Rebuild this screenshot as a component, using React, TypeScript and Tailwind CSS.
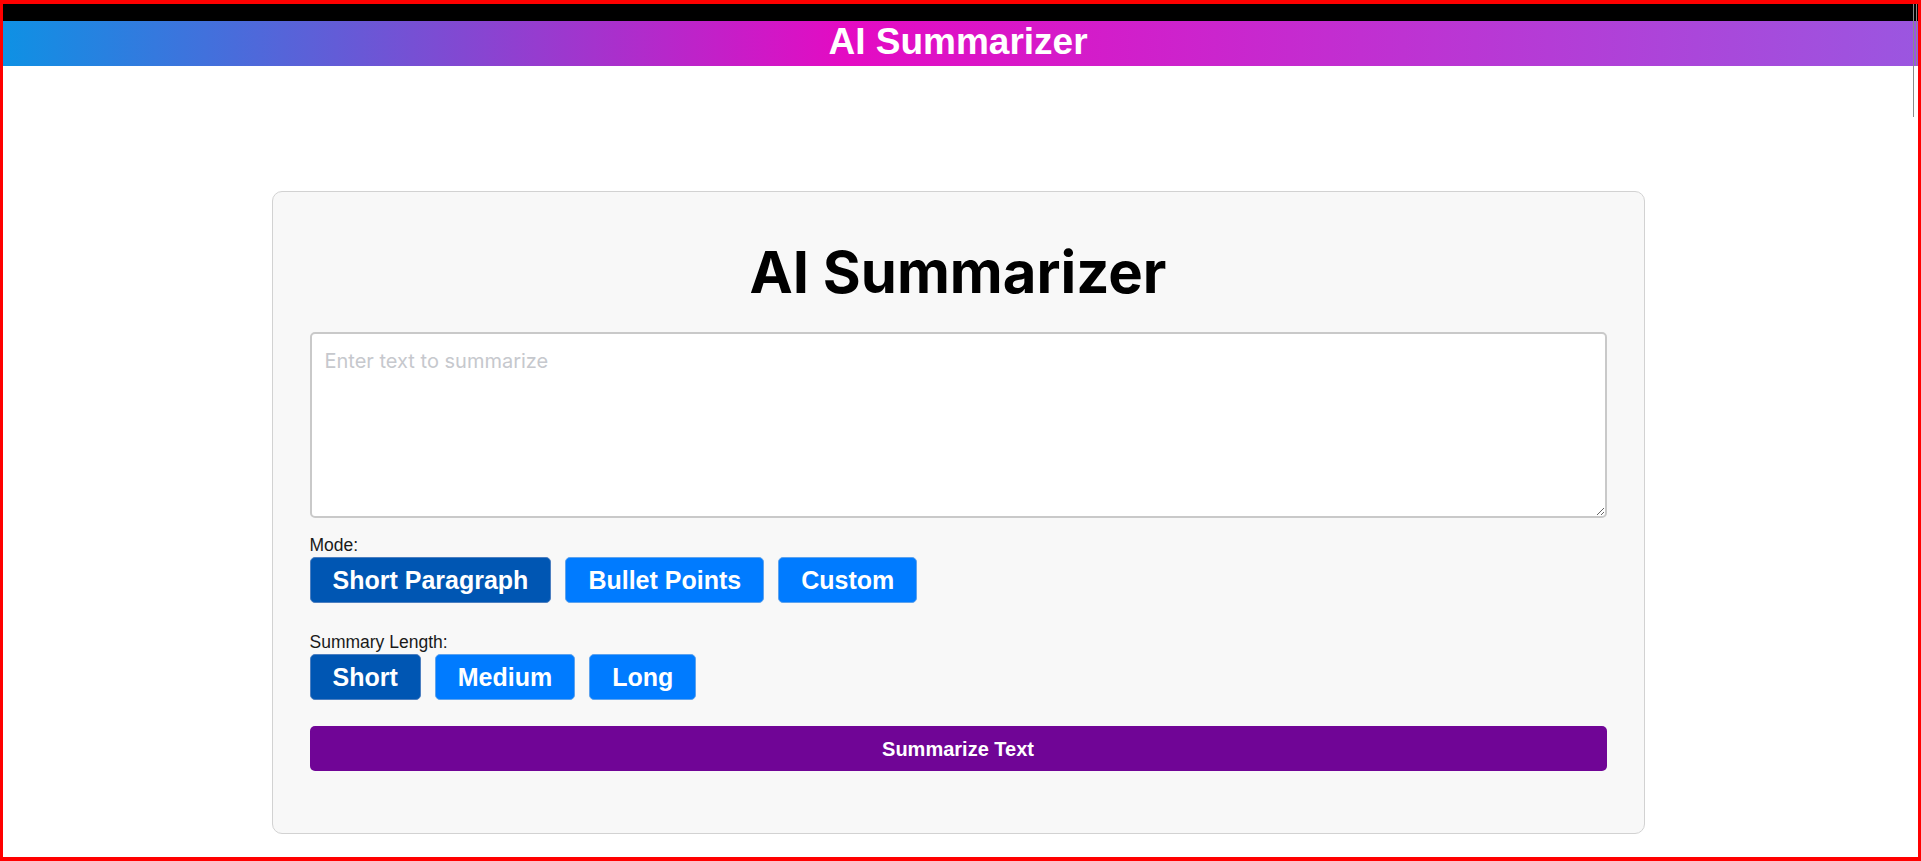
import React, { useState } from "react";

const modes = ["Short Paragraph", "Bullet Points", "Custom"];
const lengths = ["Short", "Medium", "Long"];

function OptionButton({
  label,
  active,
  onClick,
}: {
  label: string;
  active: boolean;
  onClick: () => void;
}) {
  return (
    <button
      type="button"
      onClick={onClick}
      className={
        active
          ? "h-[46px] px-[22px] rounded-[5px] border border-[#4d7fc0] bg-[#0056b3] text-white text-[25px] font-bold leading-none"
          : "h-[46px] px-[22px] rounded-[5px] border border-[#5ea3ee] bg-[#007bff] text-white text-[25px] font-bold leading-none"
      }
    >
      {label}
    </button>
  );
}

export default function App() {
  const [mode, setMode] = useState("Short Paragraph");
  const [length, setLength] = useState("Short");
  const [text, setText] = useState("");

  return (
    <div className="relative h-[861px] overflow-hidden border-x-[3px] border-y-4 border-[#ff0000] bg-white font-['Liberation_Sans',Arial,sans-serif]">
      {/* scrollbar thumb outline */}
      <div className="absolute top-0 right-[4px] h-[113px] w-px bg-[#8a8a8a]" />
      <div className="absolute top-0 right-[1px] h-[62px] w-px bg-[#8a8a8a]" />

      <div className="h-[17px] bg-black" />
      <header className="h-[45px] pr-[5px] bg-[linear-gradient(to_right,#0e91e4_0%,#e40bc3_44%,#9b56e0_100%)]">
        <h1 className="text-center text-white font-bold text-[37px] leading-[42px]">
          AI Summarizer
        </h1>
      </header>

      <main className="pr-[5px] pt-[125px]">
        <section className="mx-auto w-[1373px] rounded-[10px] border border-[#d2d2d2] bg-[#f8f8f8] px-[37px] pt-[46px] pb-[62px]">
          <h2 className="text-center font-['Inter',sans-serif] font-bold text-[58px] leading-[68px] text-black">
            AI Summarizer
          </h2>

          <textarea
            value={text}
            onChange={(e) => setText(e.target.value)}
            placeholder="Enter text to summarize"
            className="mt-[26px] block h-[186px] w-full rounded-[5px] border-2 border-[#c9c9c9] bg-white px-[13px] pt-[14px] pb-[12px] font-['Inter',sans-serif] text-[20px] leading-[27px] text-black placeholder:text-[#c6c8cd] outline-none"
          />

          <label className="mt-[17px] block text-[17.5px] leading-[20px] text-[#1a1a1a]">
            Mode:
          </label>
          <div className="mt-[2px] flex gap-[14px]">
            {modes.map((m) => (
              <OptionButton
                key={m}
                label={m}
                active={mode === m}
                onClick={() => setMode(m)}
              />
            ))}
          </div>

          <label className="mt-[29px] block text-[17.5px] leading-[20px] text-[#1a1a1a]">
            Summary Length:
          </label>
          <div className="mt-[2px] flex gap-[14px]">
            {lengths.map((l) => (
              <OptionButton
                key={l}
                label={l}
                active={length === l}
                onClick={() => setLength(l)}
              />
            ))}
          </div>

          <button
            type="button"
            className="mt-[26px] block h-[45px] w-full rounded-[5px] bg-[#700596] text-[20px] font-bold text-white"
          >
            Summarize Text
          </button>
        </section>
      </main>
    </div>
  );
}
